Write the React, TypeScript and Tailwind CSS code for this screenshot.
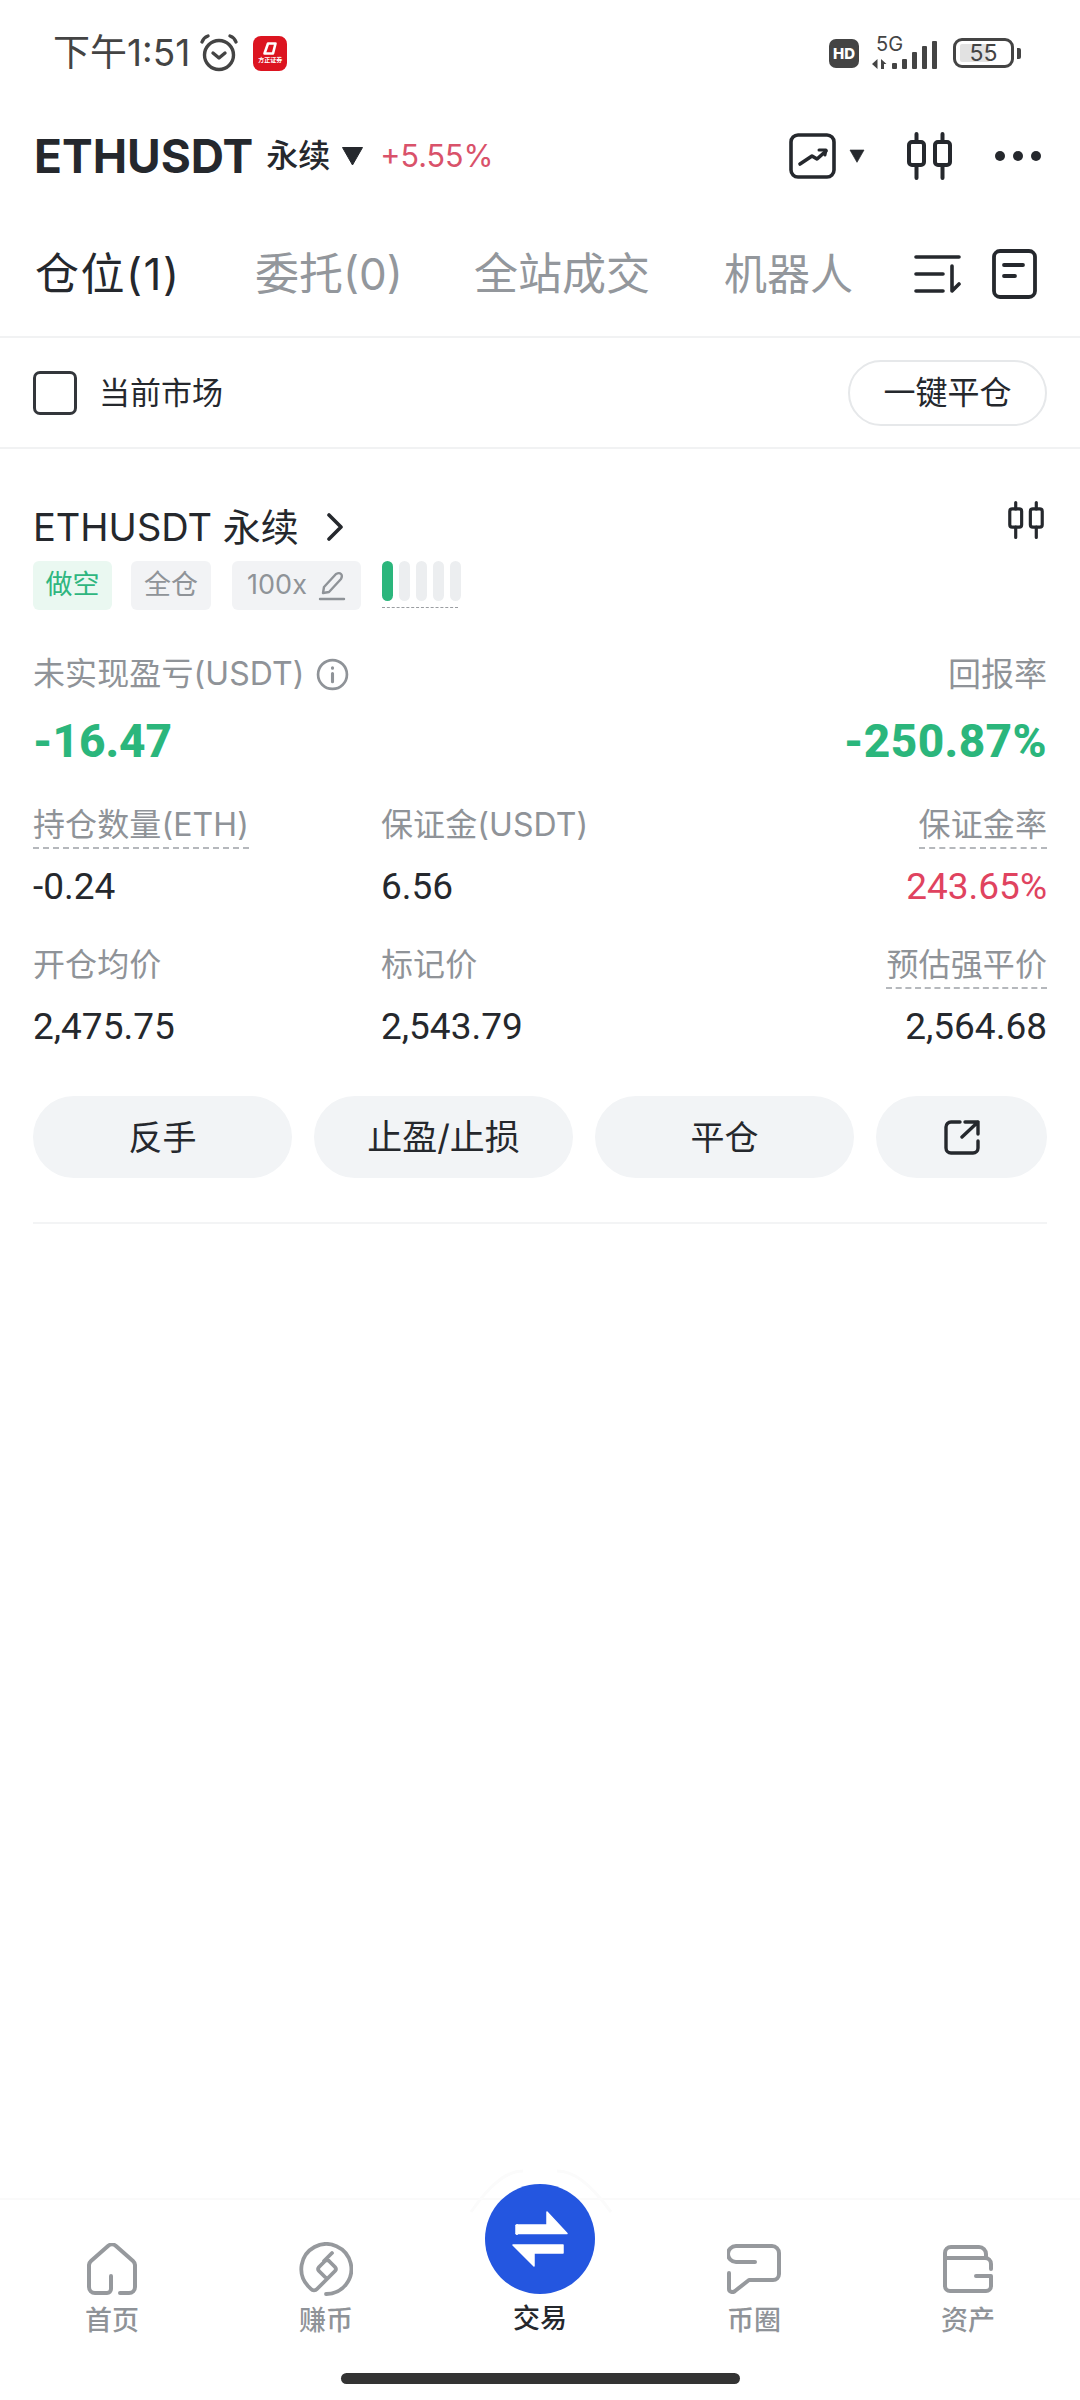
import React from "react";

const cjk = "font-['Inter','Noto_Sans_CJK_SC',sans-serif]";
const num = "font-['Roboto','Noto_Sans_CJK_SC',sans-serif]";

function Candles({ className }: { className?: string }) {
  return (
    <svg viewBox="0 0 45 48" className={className} fill="none" stroke="#25282d" strokeWidth="4" strokeLinecap="round" strokeLinejoin="round">
      <rect x="2" y="10" width="15" height="23" rx="3" />
      <rect x="28" y="10" width="15" height="23" rx="3" />
      <path d="M9.5 2v8M9.5 33v13M35.5 2v8M35.5 33v13" />
    </svg>
  );
}

function Triangle({ className }: { className?: string }) {
  return (
    <svg viewBox="0 0 22 20" className={className}>
      <path d="M1 1.5h20L11 19z" fill="#25282d" stroke="#25282d" strokeLinejoin="round" />
    </svg>
  );
}

function Label({ children, dashed, right }: { children: React.ReactNode; dashed?: boolean; right?: boolean }) {
  return (
    <div className={`flex h-[48px] items-start ${right ? "justify-end" : ""}`}>
      <span className={`text-[32px] leading-[44px] tracking-[0.1px] text-[#8f9398] ${dashed ? "border-b-2 border-dashed border-[#b5b8bc]" : ""}`}>
        {children}
      </span>
    </div>
  );
}

function Metric({ label, value, dashed, right, tone }: { label: string; value: string; dashed?: boolean; right?: boolean; tone?: string }) {
  return (
    <div className={right ? "text-right" : ""}>
      <Label dashed={dashed} right={right}>{label}</Label>
      <div className={`${num} mt-[14px] text-[37px] font-[450] leading-[44px] ${tone ?? "text-[#25282d]"}`}>{value}</div>
    </div>
  );
}

function NavItem({ label, children }: { label: string; children: React.ReactNode }) {
  return (
    <div className="flex w-[214px] flex-col items-center">
      <div className="flex h-[56px] items-center justify-center">{children}</div>
      <span className="mt-[6px] text-[27px] font-medium leading-[36px] text-[#8f9398]">{label}</span>
    </div>
  );
}

export default function App() {
  return (
    <div className={`${cjk} flex h-[2400px] w-[1080px] flex-col overflow-hidden bg-white text-[#25282d]`}>
      {/* system status bar */}
      <div className="flex h-[106px] items-center justify-between pl-[53px] pr-[59px]">
        <div className="flex items-center">
          <span className="text-[37px] leading-[44px] text-[#444]">下午1:51</span>
          <svg viewBox="0 0 40 40" className="ml-[9px] h-[40px] w-[40px]" fill="none" stroke="#444" strokeWidth="3.4" strokeLinecap="round" strokeLinejoin="round">
            <circle cx="20" cy="22" r="14.5" />
            <path d="M3 9c1-3 3-5 6-6M37 9c-1-3-3-5-6-6M14 20l6 5 6-5" />
          </svg>
          <div className="ml-[14px] flex h-[35px] w-[34px] flex-col items-center justify-center rounded-[8px] bg-[#dc1420]">
            <svg viewBox="0 0 14 13" className="h-[13px] w-[14px]" fill="none" stroke="#fff" strokeWidth="2.6" strokeLinejoin="round">
              <path d="M5 1.5h7.5L10 11.5H1.5z" />
            </svg>
            <span className="mt-[1px] whitespace-nowrap text-[6px] font-bold leading-[8px] text-white">方正证券</span>
          </div>
        </div>
        <div className="flex items-center">
          <div className="flex h-[29px] w-[30px] items-center justify-center rounded-[7px] bg-[#444] text-[15px] font-extrabold leading-none text-white">HD</div>
          <div className="relative ml-[13px] h-[32px] w-[66px]">
            <span className="absolute left-[4px] top-[-4px] text-[20px] leading-[22px] text-[#444]">5G</span>
            <svg viewBox="0 0 66 32" className="h-[32px] w-[66px]" fill="#444">
              <path d="M5.5 22v10L0 27zM9 22l5.5 5H12v5H9z" />
              <rect x="20" y="26" width="5" height="6" rx="1" />
              <rect x="30" y="22" width="5" height="10" rx="1" />
              <rect x="40" y="15" width="5" height="17" rx="1" />
              <rect x="50" y="9" width="5" height="23" rx="1" />
              <rect x="60" y="4" width="5" height="28" rx="1" />
            </svg>
          </div>
          <div className="relative ml-[15px] flex h-[30px] w-[61px] items-center justify-center rounded-[9px] border-[3px] border-[#444]">
            <div className="absolute bottom-[3px] left-[4px] top-[3px] w-[30px] rounded-[2px] bg-[#e2e2e2]" />
            <span className="relative text-[23px] leading-none text-[#444]">55</span>
          </div>
          <div className="ml-[3px] h-[11px] w-[4px] rounded-r-[2px] bg-[#444]" />
        </div>
      </div>

      {/* instrument header */}
      <div className="flex h-[100px] items-center pl-[34px] pr-[39px]">
        <span className="text-[46px] font-bold leading-[52px]">ETHUSDT</span>
        <span className="ml-[13px] text-[32px] font-medium leading-[40px]">永续</span>
        <Triangle className="ml-[11px] h-[20px] w-[23px]" />
        <span className="ml-[16px] text-[30.5px] leading-[40px] text-[#d9526a]">+5.55%</span>
        <svg viewBox="0 0 47 46" className="ml-auto h-[46px] w-[47px]" fill="none" stroke="#25282d" strokeLinecap="round" strokeLinejoin="round">
          <rect x="2" y="2" width="43" height="42" rx="7" strokeWidth="3.6" />
          <path d="M11 31l12-8 5 3 9-8" strokeWidth="3.6" />
          <path d="M30 17h7l-1 5" strokeWidth="3" />
        </svg>
        <Triangle className="ml-[13px] h-[14px] w-[16px]" />
        <Candles className="ml-[42px] h-[48px] w-[45px]" />
        <div className="ml-[43px] flex gap-[8px]">
          <span className="h-[10px] w-[10px] rounded-full bg-[#25282d]" />
          <span className="h-[10px] w-[10px] rounded-full bg-[#25282d]" />
          <span className="h-[10px] w-[10px] rounded-full bg-[#25282d]" />
        </div>
      </div>

      {/* order tabs */}
      <div className="flex h-[132px] items-center border-b-2 border-[#f1f2f3] pl-[35px] pr-[43px] pt-[6px]">
        <span className="w-[220px] text-[44px] leading-[56px] tracking-[1.5px]">仓位(1)</span>
        <span className="w-[219px] text-[44px] leading-[56px] text-[#93979c]">委托(0)</span>
        <span className="w-[250px] text-[44px] leading-[56px] text-[#93979c]">全站成交</span>
        <span className="text-[43px] leading-[56px] text-[#93979c]">机器人</span>
        <svg viewBox="0 0 47 40" className="ml-auto h-[40px] w-[47px]" fill="none" stroke="#25282d" strokeWidth="3.6" strokeLinecap="round" strokeLinejoin="round">
          <path d="M2 3h43M2 20h27M2 37h27M38 12v25l7-7" />
        </svg>
        <svg viewBox="0 0 45 50" className="ml-[31px] h-[50px] w-[45px]" fill="none" stroke="#25282d" strokeWidth="3.8" strokeLinecap="round">
          <rect x="2" y="2" width="41" height="46" rx="6" />
          <path d="M12 16h19M12 27h11" />
        </svg>
      </div>

      {/* market filter */}
      <div className="flex h-[111px] items-center justify-between border-b-2 border-[#f1f2f3] pl-[33px] pr-[33px]">
        <div className="flex items-center">
          <div className="h-[44px] w-[44px] rounded-[7px] border-[3px] border-[#33363b]" />
          <span className="ml-[22px] text-[31px] leading-[40px]">当前市场</span>
        </div>
        <div className="flex h-[66px] w-[199px] items-center justify-center rounded-full border-2 border-[#e6e8ea] text-[32px] leading-[40px]">一键平仓</div>
      </div>

      {/* open position card */}
      <div className="mx-[33px] border-b-2 border-[#f3f4f5] pb-[44px] pt-[53px]">
        <div className="flex h-[50px] items-center">
          <span className="text-[38px] leading-[50px]">ETHUSDT 永续</span>
          <svg viewBox="0 0 16 28" className="ml-[28px] h-[28px] w-[16px]" fill="none" stroke="#25282d" strokeWidth="3.6" strokeLinecap="round" strokeLinejoin="round">
            <path d="M2 2l12 12L2 26" />
          </svg>
          <Candles className="-mt-[14px] ml-auto mr-[3px] h-[38px] w-[36px]" />
        </div>

        <div className="mt-[9px] flex items-start">
          <span className="flex h-[49px] w-[79px] items-center justify-center rounded-[6px] bg-[#eaf8f1] text-[27px] text-[#2fb67f]">做空</span>
          <span className="ml-[19px] flex h-[49px] w-[80px] items-center justify-center rounded-[6px] bg-[#f2f3f5] text-[27px] text-[#8f9398]">全仓</span>
          <span className="ml-[21px] flex h-[49px] w-[129px] items-center justify-center gap-[11px] rounded-[6px] bg-[#f2f3f5] text-[27px] text-[#8f9398]">
            100x
            <svg viewBox="0 0 28 30" className="h-[30px] w-[28px]" fill="none" stroke="#8f9398" strokeWidth="2.4" strokeLinecap="round" strokeLinejoin="round">
              <path d="M2 28h24M5 22l1-6L18 3c2-1 4-1 5 0s1 3 0 5L11 21z" />
            </svg>
          </span>
          <div className="ml-[21px] flex w-[80px] flex-col">
            <div className="flex gap-[6px]">
              <span className="h-[40px] w-[11px] rounded-full bg-[#2bb67c]" />
              <span className="h-[40px] w-[11px] rounded-full bg-[#eceef0]" />
              <span className="h-[40px] w-[11px] rounded-full bg-[#eceef0]" />
              <span className="h-[40px] w-[11px] rounded-full bg-[#eceef0]" />
              <span className="h-[40px] w-[11px] rounded-full bg-[#eceef0]" />
            </div>
            <div className="mt-[6px] w-[76px] border-b-[1.5px] border-dashed border-[#9a9da1]" />
          </div>
        </div>

        <div className="mt-[42px] flex justify-between">
          <div className="flex items-center">
            <span className="text-[32px] leading-[44px] tracking-[0.1px] text-[#8f9398]">未实现盈亏(USDT)</span>
            <svg viewBox="0 0 32 32" className="ml-[11px] h-[33px] w-[33px]" fill="none" stroke="#8f9398" strokeWidth="2.6" strokeLinecap="round">
              <circle cx="16" cy="16" r="14" />
              <path d="M16 15v8M16 9.5v.5" strokeWidth="3" />
            </svg>
          </div>
          <span className="text-[33px] leading-[44px] text-[#8f9398]">回报率</span>
        </div>
        <div className={`${num} mt-[19px] flex justify-between text-[46px] font-extrabold leading-[52px] text-[#2bb67c]`}>
          <span>-16.47</span>
          <span className="tracking-[0.4px]">-250.87%</span>
        </div>

        <div className="mt-[36px] grid grid-cols-[348px_1fr_1fr]">
          <Metric label="持仓数量(ETH)" value="-0.24" dashed />
          <Metric label="保证金(USDT)" value="6.56" />
          <Metric label="保证金率" value="243.65%" dashed right tone="text-[#e0435f]" />
          <div className="col-span-3 h-[34px]" />
          <Metric label="开仓均价" value="2,475.75" />
          <Metric label="标记价" value="2,543.79" />
          <Metric label="预估强平价" value="2,564.68" dashed right />
        </div>

        <div className="mt-[47px] flex gap-[22px]">
          <div className="flex h-[82px] w-[259px] items-center justify-center rounded-full bg-[#f2f4f6] text-[34px]">反手</div>
          <div className="flex h-[82px] w-[259px] items-center justify-center rounded-full bg-[#f2f4f6] text-[35px]">止盈/止损</div>
          <div className="flex h-[82px] w-[259px] items-center justify-center rounded-full bg-[#f2f4f6] text-[34px]">平仓</div>
          <div className="flex h-[82px] flex-1 items-center justify-center rounded-full bg-[#f2f4f6]">
            <svg viewBox="0 0 36 36" className="h-[36px] w-[36px]" fill="none" stroke="#25282d" strokeWidth="3.4" strokeLinecap="round" strokeLinejoin="round">
              <path d="M16 3H7a5 5 0 0 0-5 5v21a5 5 0 0 0 5 5h22a5 5 0 0 0 5-5v-7M21 3h13v12M34 3L18 18" />
            </svg>
          </div>
        </div>
      </div>

      <div className="flex-1" />

      {/* bottom navigation */}
      <div className="flex h-[164px] items-start border-t-2 border-[#fafafa] pl-[5px] pt-[41px]">
        <NavItem label="首页">
          <svg viewBox="0 0 50 52" className="h-[52px] w-[50px]" fill="none" stroke="#96999d" strokeWidth="4" strokeLinecap="round" strokeLinejoin="round">
            <path d="M24 33v13a4 4 0 0 1-4 4H8a6 6 0 0 1-6-6V22a6 6 0 0 1 2-4L21 3a6 6 0 0 1 8 0l17 15a6 6 0 0 1 2 4v22a6 6 0 0 1-6 6h-9" />
          </svg>
        </NavItem>
        <NavItem label="赚币">
          <svg viewBox="0 0 54 54" className="h-[54px] w-[54px]" fill="none" stroke="#96999d" strokeWidth="3.8" strokeLinecap="round" strokeLinejoin="round">
            <path d="M27 52a25 25 0 1 0-18-8l3 3a4 4 0 0 0 6 0l18-18a3 3 0 0 0 0-4l-6-6a3 3 0 0 0-4 0l-6 6a3 3 0 0 0 0 4l6 6M25 19l8-8" />
          </svg>
        </NavItem>
        <div className="flex w-[214px] flex-col items-center">
          <div className="relative -mt-[57px] flex h-[110px] w-[110px] items-center justify-center rounded-full bg-[#2456e0]">
            {/* raised notch outline behind the trade button */}
            <svg viewBox="0 0 110 110" className="absolute inset-0 overflow-visible" fill="none" stroke="#fbfbfb" strokeWidth="3">
              <path d="M-14 28C8 -4 24 -13 38 -13M72 -13C88 -13 104 -2 126 28" />
            </svg>
            <svg viewBox="0 0 110 110" className="relative h-[110px] w-[110px]" fill="#fff" stroke="#fff" strokeWidth="1.5" strokeLinejoin="round">
              <path d="M33 41H62V28L82 49.5H33a1 1 0 0 1-2-1v-6a1 1 0 0 1 2-1z" />
              <path d="M28 61H78V69H49V82z" />
            </svg>
          </div>
          <span className="mt-[7px] text-[27px] font-medium leading-[36px] text-[#25282d]">交易</span>
        </div>
        <NavItem label="币圈">
          <svg viewBox="0 0 54 50" className="h-[50px] w-[54px]" fill="none" stroke="#96999d" strokeWidth="4" strokeLinecap="round" strokeLinejoin="round">
            <path d="M28 18H9a7 7 0 0 1 0-16h36a7 7 0 0 1 7 7v21a6 6 0 0 1-6 6H22L8 47c-2 2-6 1-6-2V29" />
          </svg>
        </NavItem>
        <NavItem label="资产">
          <svg viewBox="0 0 50 48" className="h-[48px] w-[50px]" fill="none" stroke="#96999d" strokeWidth="4" strokeLinecap="round" strokeLinejoin="round">
            <path d="M2 18V8a6 6 0 0 1 6-6h28a7 7 0 0 1 7 7v4M48 24v-5a6 6 0 0 0-6-6H2v28a5 5 0 0 0 5 5h36a5 5 0 0 0 5-5V31H33" />
          </svg>
        </NavItem>
      </div>

      {/* gesture bar */}
      <div className="flex h-[38px] items-start justify-center pt-[11px]">
        <div className="h-[11px] w-[399px] rounded-full bg-[#333]" />
      </div>
    </div>
  );
}
